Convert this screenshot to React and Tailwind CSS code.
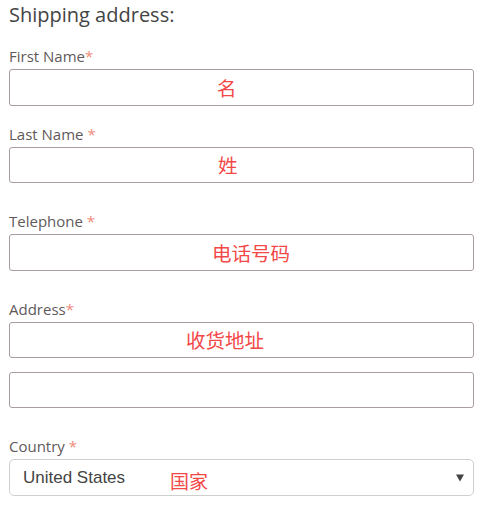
import React from 'react';

const latin = { fontFamily: '"Open Sans", "Noto Sans", sans-serif' };
const cjk = { fontFamily: '"Noto Sans CJK SC", sans-serif' };

function Label({ text, gap, className }) {
    return (
        <div className={`text-[15px] leading-[16px] text-[#5f5a5a] ${className}`} style={latin}>
            {text}
            {gap && ' '}
            <span className="text-[#f08a7a]">*</span>
        </div>
    );
}

function Field({ hint, hintLeft, className, h = 'h-[37px]' }) {
    return (
        <div className={`relative w-[465px] ${h} border border-[#a89c9c] rounded-[3px] ${className}`}>
            {hint && (
                <span className="absolute top-1/2 -translate-y-1/2 text-[19.5px] text-[#f24848]"
                    style={{ ...cjk, left: hintLeft }}>
                    {hint}
                </span>
            )}
        </div>
    );
}

export default function App() {
    return (
        <div className="w-[486px] h-[506px] bg-white px-[9px] pt-[4px]">
            <div className="text-[20px] leading-[22px] text-[#444]" style={latin}>Shipping address:</div>

            <Label text="First Name" className="mt-[22px]" />
            <Field hint="名" hintLeft={207} className="mt-[5px]" />

            <Label text="Last Name" gap className="mt-[20px]" />
            <Field hint="姓" hintLeft={208} className="mt-[5px]" h="h-[36px]" />

            <Label text="Telephone" gap className="mt-[30px]" />
            <Field hint="电话号码" hintLeft={202} className="mt-[5px]" />

            <Label text="Address" className="mt-[30px]" />
            <Field hint="收货地址" hintLeft={176} className="mt-[5px]" h="h-[36px]" />
            <Field className="mt-[14px]" h="h-[36px]" />

            <Label text="Country" gap className="mt-[30px]" />
            <div className="relative mt-[5px] w-[465px] h-[37px] border border-[#cfcfcf] rounded-[5px] flex items-center pl-[13px]">
                <span className="text-[17px] text-[#444]" style={{ fontFamily: '"Liberation Sans", Arial, sans-serif' }}>United States</span>
                <span className="absolute left-[160px] top-[7px] text-[19px] text-[#f24848]" style={cjk}>国家</span>
                <span className="absolute right-[9px] top-1/2 -translate-y-1/2 w-0 h-0 border-l-[4px] border-r-[4px] border-t-[7px] border-l-transparent border-r-transparent border-t-[#444]" />
            </div>
        </div>
    );
}
